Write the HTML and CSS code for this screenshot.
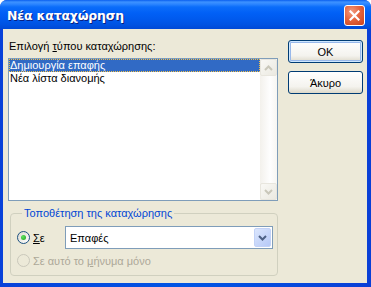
FILE: index.html
```html
<!DOCTYPE html>
<html>

<head>
    <meta charset="utf-8">
    <title>Νέα καταχώρηση</title>
    <link rel="stylesheet" href="styles.css">
</head>

<body>
    <div class="window">
        <div class="titlebar">
            <span class="title">Νέα καταχώρηση</span>
            <button class="close" type="button">
                <svg width="11" height="11" viewBox="0 0 11 11">
                    <path d="M1.5 1.5 L9.5 9.5 M9.5 1.5 L1.5 9.5" stroke="#fff" stroke-width="2.2" stroke-linecap="square" fill="none"/>
                </svg>
            </button>
        </div>
        <div class="client">
            <div class="left">
                <div class="field-label">Επιλογή <u>τ</u>ύπου καταχώρησης:</div>
                <div class="listbox">
                    <ul class="items">
                        <li class="selected"><span class="focus">Δημιουργία επαφής</span></li>
                        <li>Νέα λίστα διανομής</li>
                    </ul>
                    <div class="scrollbar">
                        <div class="sb-btn">
                            <svg width="9" height="6" viewBox="0 0 9 6"><path d="M1 5 L4.5 1.5 L8 5" stroke="#c9c7ba" stroke-width="2" fill="none"/></svg>
                        </div>
                        <div class="sb-track"></div>
                        <div class="sb-btn">
                            <svg width="9" height="6" viewBox="0 0 9 6"><path d="M1 1 L4.5 4.5 L8 1" stroke="#c9c7ba" stroke-width="2" fill="none"/></svg>
                        </div>
                    </div>
                </div>
                <fieldset class="group">
                    <legend>Τοποθέτηση της καταχώρησης</legend>
                    <div class="radio-row">
                        <span class="radio checked"><span class="dot"></span></span>
                        <span><u>Σ</u>ε</span>
                        <div class="combo">
                            <span class="combo-text">Επαφές</span>
                            <span class="combo-btn">
                                <svg width="9" height="6" viewBox="0 0 9 6"><path d="M1 1 L4.5 4.5 L8 1" stroke="#4d6185" stroke-width="2" fill="none"/></svg>
                            </span>
                        </div>
                    </div>
                    <div class="radio-row disabled">
                        <span class="radio"></span>
                        <span>Σε αυτό το <u>μ</u>ήνυμα μόνο</span>
                    </div>
                </fieldset>
            </div>
            <div class="buttons">
                <button class="btn default" type="button">OK</button>
                <button class="btn" type="button">Άκυρο</button>
            </div>
        </div>
    </div>
</body>

</html>
```

FILE: styles.css
```css
body {
    margin: 0;
    font-family: "Liberation Sans", "DejaVu Sans", sans-serif;
    font-size: 11px;
    background-color: #fff;
}

.window {
    width: 371px;
    height: 287px;
    display: flex;
    flex-direction: column;
    background: linear-gradient(to right, #0841d9, #0055e5 50%, #0a3fd6);
    border-radius: 7px 7px 0 0;
    overflow: hidden;
}

.titlebar {
    height: 29px;
    flex: none;
    display: flex;
    align-items: center;
    justify-content: space-between;
    padding: 0 6px 0 7px;
    background: linear-gradient(to bottom, #0a5fef 0%, #3d92ff 7%, #2d86ff 14%, #0b6dfa 24%, #0160f6 45%, #005aee 65%, #0053e2 85%, #0049d6 100%);
}

.title {
    color: #fff;
    font-family: "DejaVu Sans", sans-serif;
    font-weight: bold;
    font-size: 12.5px;
    letter-spacing: -0.2px;
    text-shadow: 1px 1px 0 #0a1f80;
    margin-top: 1px;
}

.close {
    width: 21px;
    height: 21px;
    margin-top: 2px;
    padding: 0;
    border: 1px solid #fff;
    border-radius: 3px;
    background: radial-gradient(circle at 35% 30%, #f29b7f 0%, #e5653f 45%, #c8411a 100%);
    display: flex;
    align-items: center;
    justify-content: center;
}

.client {
    flex: 1;
    margin: 0 4px 4px 3px;
    background-color: #ece9d8;
    display: flex;
    padding: 11px 5px 0 5px;
    gap: 10px;
}

.left {
    width: 270px;
    display: flex;
    flex-direction: column;
}

.field-label {
    line-height: 13px;
    color: #000;
    padding-left: 1px;
}

.listbox {
    margin-top: 5px;
    height: 143px;
    box-sizing: border-box;
    border: 1px solid #7f9db9;
    background: #fff;
    display: flex;
}

.items {
    flex: 1;
    list-style: none;
    margin: 0;
    padding: 0;
}

.items li {
    line-height: 13px;
    height: 13px;
    padding-left: 1px;
    color: #000;
}

.items li.selected {
    background: #316ac5;
    color: #fff;
    outline: 1px dotted #f2c14a;
    outline-offset: -1px;
}

.scrollbar {
    width: 17px;
    display: flex;
    flex-direction: column;
    background: linear-gradient(to right, #f3f1ec, #fefefe 60%, #f7f6f2);
}

.sb-btn {
    height: 17px;
    box-sizing: border-box;
    border: 1px solid #e8e6de;
    border-radius: 2px;
    background: linear-gradient(135deg, #f9f8f5, #ebe9e1);
    display: flex;
    align-items: center;
    justify-content: center;
}

.sb-track {
    flex: 1;
}

.group {
    margin: 6px 0 0 2px;
    padding: 6px 4px 8px 6px;
    border: 1px solid #d0d0bf;
    border-radius: 4px;
    width: 268px;
    box-sizing: border-box;
}

.group legend {
    color: #0046d5;
    padding: 0 2px;
    margin-left: 5px;
    line-height: 13px;
}

.radio-row {
    display: flex;
    align-items: center;
    gap: 3px;
    color: #000;
}

.radio-row.disabled {
    color: #aca899;
    margin-top: 5px;
    height: 13px;
}

.radio {
    width: 13px;
    height: 13px;
    box-sizing: border-box;
    border: 1px solid #1c5180;
    border-radius: 50%;
    background: linear-gradient(135deg, #dcd9d0, #ffffff);
    display: flex;
    align-items: center;
    justify-content: center;
    flex: none;
}

.radio-row.disabled .radio {
    border-color: #cac8bb;
    background: transparent;
}

.radio .dot {
    width: 5px;
    height: 5px;
    border-radius: 50%;
    background: radial-gradient(circle at 35% 35%, #5fe35f, #21a121);
}

.combo {
    margin-left: auto;
    width: 208px;
    height: 23px;
    box-sizing: border-box;
    border: 1px solid #7f9db9;
    background: #fff;
    display: flex;
    align-items: center;
    padding: 1px;
}

.combo-text {
    flex: 1;
    padding-left: 3px;
}

.combo-btn {
    width: 17px;
    height: 19px;
    border-radius: 2px;
    background: linear-gradient(135deg, #dbe6fd, #b6c9f7);
    border: 1px solid #c2d2f7;
    box-sizing: border-box;
    display: flex;
    align-items: center;
    justify-content: center;
}

.buttons {
    display: flex;
    flex-direction: column;
    gap: 8px;
}

.btn {
    width: 75px;
    height: 23px;
    font-family: inherit;
    font-size: 11px;
    color: #000;
    border: 1px solid #003c74;
    border-radius: 3px;
    background: linear-gradient(to bottom, #ffffff, #f4f3ee 70%, #dcd8c9);
    padding: 0;
}

.btn.default {
    box-shadow: inset 0 0 0 1px #cee7ff, inset 0 0 0 2px #98b8ea;
}
```
